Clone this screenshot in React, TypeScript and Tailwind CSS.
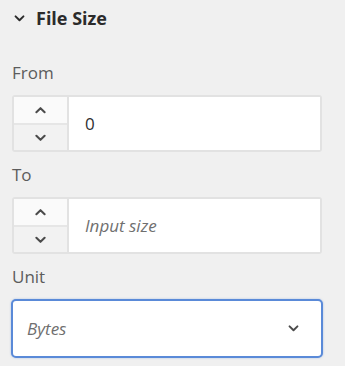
import { useState } from 'react';

function Chevron({ dir = 'down', className = '' }: { dir?: 'up' | 'down'; className?: string }) {
  return (
    <svg viewBox="0 0 12 8" className={className} fill="none" stroke="currentColor" strokeWidth={2.2} strokeLinecap="round" strokeLinejoin="round">
      {dir === 'down' ? <path d="M1.5 1.5 6 6l4.5-4.5" /> : <path d="M1.5 6.5 6 2l4.5 4.5" />}
    </svg>
  );
}

function NumberField({ value, placeholder }: { value?: string; placeholder?: string }) {
  const [val, setVal] = useState(value ?? '');
  return (
    <div className="flex h-[57px] w-[310px] rounded-[3px] border-2 border-[#e2e2e2]">
      <div className="flex w-[55px] flex-col border-r-2 border-[#e2e2e2]">
        <button className="flex h-[28px] items-center justify-center border-b-2 border-[#e6e6e6] bg-[#fafafa] text-[#4b4b4b]">
          <Chevron dir="up" className="h-[8px] w-[11px]" />
        </button>
        <button className="flex flex-1 items-center justify-center bg-[#f2f2f2] text-[#4b4b4b]">
          <Chevron dir="down" className="h-[8px] w-[11px]" />
        </button>
      </div>
      <input
        value={val}
        onChange={(e) => setVal(e.target.value)}
        placeholder={placeholder}
        className="min-w-0 flex-1 bg-white pl-[16px] text-[17px] text-[#2f2f2f] placeholder:italic placeholder:text-[#6f6f6f] focus:outline-none"
      />
    </div>
  );
}

export default function App() {
  return (
    <div className="h-[366px] w-[345px] bg-[#f0f0f0] px-[12px] font-['Open_Sans',sans-serif]">
      {/* Header */}
      <div className="flex h-[36px] items-center gap-[11px] pl-[2px] text-[#2b2b2b]">
        <Chevron dir="down" className="h-[7px] w-[11px]" />
        <span className="text-[18px] font-bold">File Size</span>
      </div>

      <div className="mt-[25px] text-[17px] leading-[24px] text-[#5c5c5c]">From</div>
      <div className="mt-[10px]">
        <NumberField value="0" />
      </div>

      <div className="mt-[11px] text-[17px] leading-[24px] text-[#5c5c5c]">To</div>
      <div className="mt-[10px]">
        <NumberField placeholder="Input size" />
      </div>

      <div className="mt-[11px] text-[17px] leading-[24px] text-[#5c5c5c]">Unit</div>
      <div className="mt-[10px] -ml-[1px]">
        <button className="flex h-[59px] w-[312px] items-center justify-between rounded-[5px] border-2 border-[#5a8ad8] bg-white pl-[14px] pr-[22px] shadow-[0_0_2px_rgba(90,138,216,0.5)]">
          <span className="text-[17px] italic text-[#6f6f6f]">Bytes</span>
          <Chevron dir="down" className="h-[7px] w-[11px] text-[#4b4b4b]" />
        </button>
      </div>
    </div>
  );
}
